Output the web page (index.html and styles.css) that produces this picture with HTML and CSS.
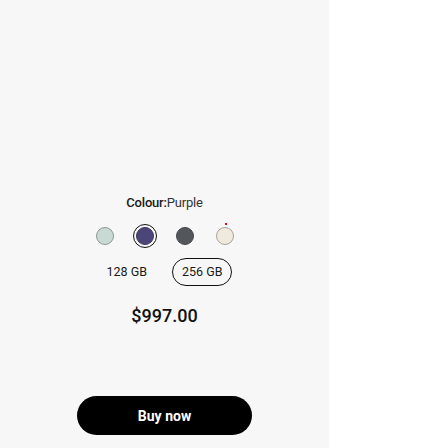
FILE: index.html
```html
<!DOCTYPE html>
<html>
<head>
<meta charset="utf-8">
<link rel="stylesheet" href="styles.css">
</head>
<body>
<div class="panel">
  <div class="label"><span class="label-key">Colour:</span><span class="label-val">Purple</span></div>
  <div class="swatches">
    <span class="swatch"><span class="dot mint"></span></span>
    <span class="swatch selected"><span class="dot purple"></span></span>
    <span class="swatch"><span class="dot graphite"></span></span>
    <span class="swatch"><span class="dot cream"></span><span class="badge"></span></span>
  </div>
  <div class="storage">
    <span class="opt">128 GB</span>
    <span class="opt active">256 GB</span>
  </div>
  <div class="price">$997.00</div>
  <button class="buy">Buy now</button>
</div>
</body>
</html>
```
FILE: styles.css
```css
html, body {
  margin: 0;
  padding: 0;
  background: #ffffff;
}
.panel {
  width: 329px;
  height: 448px;
  background: #f7f7f7;
  display: flex;
  flex-direction: column;
  align-items: center;
  padding-top: 195px;
  box-sizing: border-box;
  font-family: Roboto, "Noto Sans", sans-serif;
  color: #1a1a1a;
}
.label {
  font-size: 13px;
  line-height: 16px;
  height: 16px;
  letter-spacing: -0.2px;
}
.label-key {
  font-weight: 500;
}
.label-val {
  font-weight: 400;
  color: #333;
}
.swatches {
  display: flex;
  gap: 16px;
  margin-top: 13px;
  height: 24px;
}
.swatch {
  position: relative;
  width: 24px;
  height: 24px;
  box-sizing: border-box;
  border-radius: 50%;
  display: flex;
  align-items: center;
  justify-content: center;
}
.swatch.selected {
  border: 1.5px solid #111;
}
.dot {
  width: 18px;
  height: 18px;
  border-radius: 50%;
  box-sizing: border-box;
}
.mint { background: #c9d9d3; border: 1px solid #8c9a95; }
.purple { background: #4b4677; border: 1px solid #3a365e; }
.graphite { background: #53565b; border: 1px solid #45474b; }
.cream { background: #f0e9de; border: 1px solid #a9a399; }
.badge {
  position: absolute;
  top: -1px;
  left: 12px;
  width: 2px;
  height: 2px;
  background: #ff0000;
}
.storage {
  display: flex;
  gap: 15px;
  margin-top: 10px;
  align-items: center;
}
.opt {
  font-size: 12.5px;
  line-height: 26px;
  padding: 0 9px;
  border: 1px solid transparent;
  border-radius: 14px;
  color: #1a1a1a;
}
.opt.active {
  border-color: #111;
}
.price {
  margin-top: 18px;
  font-size: 18px;
  line-height: 24px;
  font-weight: 500;
  color: #111;
}
.buy {
  margin-top: 68px;
  width: 175px;
  height: 39px;
  border: none;
  border-radius: 20px;
  background: #000;
  color: #fff;
  font-family: Roboto, "Liberation Sans", sans-serif;
  font-weight: 700;
  font-size: 14px;
  padding: 0;
}
```
